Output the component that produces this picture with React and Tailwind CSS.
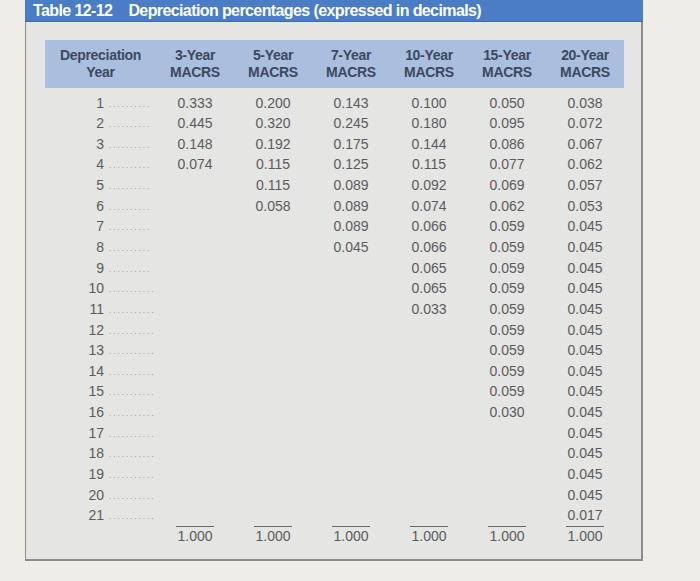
import React from 'react';

const columns = ['3-Year', '5-Year', '7-Year', '10-Year', '15-Year', '20-Year'];

// values per column, top to bottom
const data = [
  ['0.333', '0.445', '0.148', '0.074'],
  ['0.200', '0.320', '0.192', '0.115', '0.115', '0.058'],
  ['0.143', '0.245', '0.175', '0.125', '0.089', '0.089', '0.089', '0.045'],
  ['0.100', '0.180', '0.144', '0.115', '0.092', '0.074', '0.066', '0.066', '0.065', '0.065', '0.033'],
  ['0.050', '0.095', '0.086', '0.077', '0.069', '0.062', '0.059', '0.059', '0.059', '0.059', '0.059', '0.059', '0.059', '0.059', '0.059', '0.030'],
  ['0.038', '0.072', '0.067', '0.062', '0.057', '0.053', '0.045', '0.045', '0.045', '0.045', '0.045', '0.045', '0.045', '0.045', '0.045', '0.045', '0.045', '0.045', '0.045', '0.045', '0.017'],
];

const years = Array.from({ length: 21 }, (_, i) => i + 1);

function YearCell({ year }) {
  return (
    <div className="flex items-center">
      <span className="w-[59px] text-right">{year}</span>
      <span className="ml-[5px] text-[8px] tracking-[2px] leading-none mt-[3px] text-[#7a7a7a]">
        {year < 10 ? '..........' : '...........'}
      </span>
    </div>
  );
}

export default function App() {
  return (
    <div
      className="w-[700px] h-[581px] bg-[#efede8] pl-[25px] overflow-hidden"
      style={{ fontFamily: '"Liberation Sans", Arial, sans-serif' }}
    >
      <div className="w-[618px]">
        {/* Title bar */}
        <div className="h-[22px] bg-[#4a7dc6] flex items-center pl-[8px] text-white font-bold text-[16px] tracking-[-0.6px] border-b border-[#3f6aa8]">
          <span>Table 12-12</span>
          <span className="ml-[16px]">Depreciation percentages (expressed in decimals)</span>
        </div>

        {/* Panel */}
        <div className="h-[539px] bg-[#e5e5e4] border-l-[1.5px] border-r-2 border-b-2 border-[#8c8c8c] pt-[18px] pl-[19px]">
          {/* Header band */}
          <div className="w-[579px] h-[48px] bg-[#a9bfdd] grid grid-cols-[111px_repeat(6,78px)] items-center text-[14px] font-bold text-[#3c4862] leading-[17px] tracking-[-0.3px]">
            <div className="text-center">Depreciation<br />Year</div>
            {columns.map((c) => (
              <div key={c} className="text-center">{c}<br />MACRS</div>
            ))}
          </div>

          {/* Body */}
          <div className="w-[579px] pt-[4.7px] grid grid-cols-[111px_repeat(6,78px)] text-[14px] text-[#5b5b5b]">
            <div className="flex flex-col">
              {years.map((y) => (
                <div key={y} className="h-[20.65px] flex items-center">
                  <YearCell year={y} />
                </div>
              ))}
            </div>
            {data.map((col, ci) => (
              <div key={ci} className="flex flex-col">
                {years.map((y, i) => (
                  <div key={y} className="h-[20.65px] flex items-center justify-center">
                    {col[i] || ''}
                  </div>
                ))}
              </div>
            ))}
          </div>

          {/* Totals */}
          <div className="w-[579px] grid grid-cols-[111px_repeat(6,78px)] text-[14px] text-[#5b5b5b]">
            <div />
            {columns.map((c) => (
              <div key={c} className="flex justify-center">
                <span className="border-t-[1.5px] border-[#6a6a6a] leading-[19px] px-[1px]">1.000</span>
              </div>
            ))}
          </div>
        </div>
      </div>
    </div>
  );
}
